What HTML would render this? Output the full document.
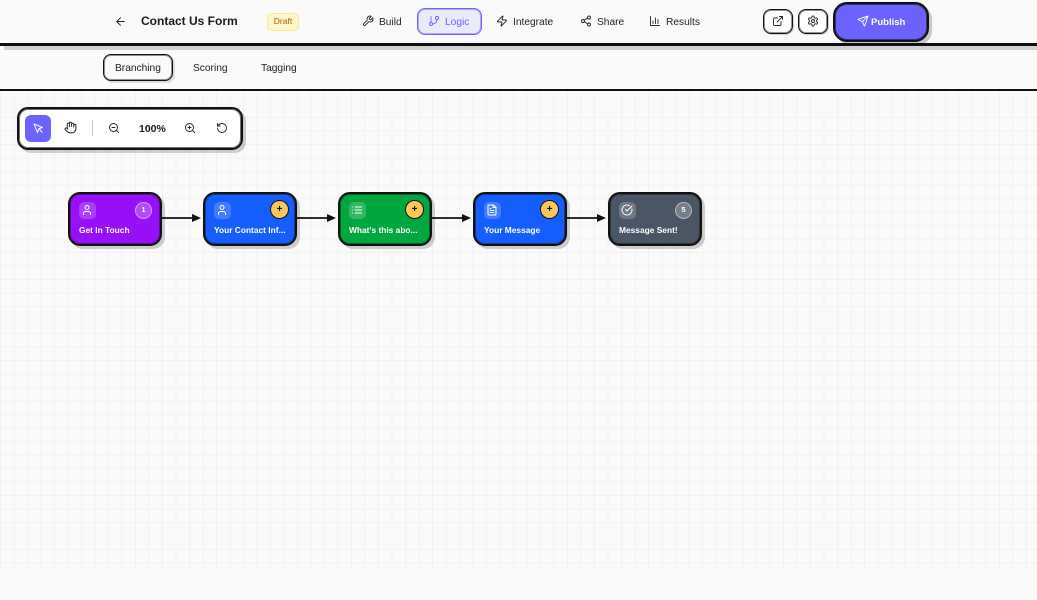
<!DOCTYPE html>
<html><head><meta charset="utf-8"><style>
*{box-sizing:border-box;margin:0;padding:0}
html,body{width:1037px;height:600px;overflow:hidden;background:#fafafa;font-family:"Liberation Sans",sans-serif;color:#111}
.a{position:absolute}
.t{position:absolute;white-space:nowrap;line-height:14px;font-size:10.2px;color:#222}
svg{position:absolute;fill:none;stroke:currentColor;stroke-width:2;stroke-linecap:round;stroke-linejoin:round}
.grid{left:0;top:90px;width:1037px;height:478px;background-image:linear-gradient(#f2f2f2 1px,transparent 1px),linear-gradient(90deg,#f2f2f2 1px,transparent 1px);background-size:13.5px 13.5px}
.node{position:absolute;top:192px;width:94px;height:54px;border:2px solid #111;border-radius:12px;box-shadow:inset 0 0 0 1px rgba(17,17,17,.45),3px 3px 0 rgba(0,0,0,.18)}
.node .ic{position:absolute;left:8.5px;top:7.5px;width:17px;height:17px;border-radius:5px;background:rgba(255,255,255,.2);color:#fff}
.node .ic svg{left:2.5px;top:2.5px}
.node .b{position:absolute;left:65px;top:8px;width:17px;height:17px;border-radius:50%;background:rgba(255,255,255,.25);border:1.5px solid rgba(255,255,255,.45);color:#fff;font-size:7.5px;font-weight:bold;text-align:center;line-height:14px}
.node .p{position:absolute;left:65px;top:6px;width:19px;height:19px;border-radius:50%;background:#fcc858;border:1.5px solid #111;color:#111;font-size:10px;font-weight:bold;text-align:center;line-height:18px}
.node .l{position:absolute;left:9px;top:31px;color:#fff;font-size:8.4px;font-weight:bold;white-space:nowrap;line-height:11px}
.btn{position:absolute;background:#fff;border:1px solid #111;border-radius:8px;box-shadow:inset 0 0 0 1px rgba(17,17,17,.45),1px 1px 0 rgba(0,0,0,.15)}
</style></head><body>
<div class="a grid"></div>

<!-- header -->
<div class="a" style="left:0;top:43px;width:1037px;height:3px;background:#111"></div>
<div class="a" style="left:4px;top:46px;width:1033px;height:4px;background:#d2d2d2"></div>
<svg style="left:114px;top:15px;color:#222;stroke-width:1.8" width="13" height="13" viewBox="0 0 24 24"><path d="M19 12H5M12 19l-7-7 7-7"/></svg>
<div class="t" style="left:141px;top:14px;font-size:12px;font-weight:bold;color:#1a1a1a">Contact Us Form</div>
<div class="a" style="left:267px;top:13px;width:32px;height:18px;background:#fdf6c8;border:1.5px solid #fbe88a;border-radius:5px;color:#a16207;font-size:8.5px;font-weight:500;text-align:center;line-height:15px">Draft</div>

<svg style="left:362px;top:15px;color:#222;stroke-width:1.8" width="12" height="12" viewBox="0 0 24 24"><path d="M14.7 6.3a1 1 0 0 0 0 1.4l1.6 1.6a1 1 0 0 0 1.4 0l3.77-3.77a6 6 0 0 1-7.94 7.94l-6.91 6.91a2.12 2.12 0 0 1-3-3l6.91-6.91a6 6 0 0 1 7.94-7.94z"/></svg>
<div class="t" style="left:379px;top:16px">Build</div>

<div class="a" style="left:417px;top:8px;width:65px;height:27px;background:#ecebfe;border:1px solid #6c63ff;border-radius:8px;box-shadow:inset 0 0 0 1px rgba(108,99,255,.5)"></div>
<svg style="left:428px;top:15px;color:#6c63ff;stroke-width:1.8" width="12" height="12" viewBox="0 0 24 24"><path d="M6 3v12"/><circle cx="18" cy="6" r="3"/><circle cx="6" cy="18" r="3"/><path d="M18 9a9 9 0 0 1-9 9"/></svg>
<div class="t" style="left:445px;top:16px;color:#6c63ff">Logic</div>

<svg style="left:496px;top:15px;color:#222;stroke-width:1.8" width="12" height="12" viewBox="0 0 24 24"><path d="M4 14a1 1 0 0 1-.78-1.63l9.9-10.2a.5.5 0 0 1 .86.46l-1.92 6.02A1 1 0 0 0 13 10h7a1 1 0 0 1 .78 1.63l-9.9 10.2a.5.5 0 0 1-.86-.46l1.92-6.02A1 1 0 0 0 11 14z"/></svg>
<div class="t" style="left:513px;top:16px">Integrate</div>

<svg style="left:580px;top:15px;color:#222;stroke-width:1.8" width="12" height="12" viewBox="0 0 24 24"><circle cx="18" cy="5" r="3"/><circle cx="6" cy="12" r="3"/><circle cx="18" cy="19" r="3"/><path d="m8.6 13.5 6.8 4M15.4 6.5l-6.8 4"/></svg>
<div class="t" style="left:597px;top:16px">Share</div>

<svg style="left:649px;top:15px;color:#222;stroke-width:1.8" width="12" height="12" viewBox="0 0 24 24"><path d="M3 3v18h18M8 17v-5M13 17V6M18 17v-8"/></svg>
<div class="t" style="left:666px;top:16px">Results</div>

<div class="btn" style="left:763px;top:9px;width:30px;height:25px"></div>
<svg style="left:772px;top:15px;color:#222;stroke-width:1.8" width="12" height="12" viewBox="0 0 24 24"><path d="M15 3h6v6M10 14 21 3M18 13v6a2 2 0 0 1-2 2H5a2 2 0 0 1-2-2V8a2 2 0 0 1 2-2h6"/></svg>
<div class="btn" style="left:798px;top:9px;width:30px;height:25px"></div>
<svg style="left:807px;top:15px;color:#222;stroke-width:1.8" width="12" height="12" viewBox="0 0 24 24"><path d="M12.22 2h-.44a2 2 0 0 0-2 2v.18a2 2 0 0 1-1 1.73l-.43.25a2 2 0 0 1-2 0l-.15-.08a2 2 0 0 0-2.73.73l-.22.38a2 2 0 0 0 .73 2.73l.15.1a2 2 0 0 1 1 1.72v.51a2 2 0 0 1-1 1.74l-.15.09a2 2 0 0 0-.73 2.73l.22.38a2 2 0 0 0 2.73.73l.15-.08a2 2 0 0 1 2 0l.43.25a2 2 0 0 1 1 1.73V20a2 2 0 0 0 2 2h.44a2 2 0 0 0 2-2v-.18a2 2 0 0 1 1-1.73l.43-.25a2 2 0 0 1 2 0l.15.08a2 2 0 0 0 2.73-.73l.22-.39a2 2 0 0 0-.73-2.73l-.15-.08a2 2 0 0 1-1-1.74v-.5a2 2 0 0 1 1-1.74l.15-.09a2 2 0 0 0 .73-2.73l-.22-.38a2 2 0 0 0-2.73-.73l-.15.08a2 2 0 0 1-2 0l-.43-.25a2 2 0 0 1-1-1.73V4a2 2 0 0 0-2-2z"/><circle cx="12" cy="12" r="3"/></svg>

<div class="a" style="left:833px;top:2px;width:96px;height:40px;background:#6c63ff;border:2px solid #111;border-radius:14px;box-shadow:inset 0 0 0 1px rgba(17,17,17,.6),3px 3px 0 rgba(0,0,0,.2)"></div>
<svg style="left:857px;top:15px;color:#fff;stroke-width:1.8" width="12" height="12" viewBox="0 0 24 24"><path d="M14.5 21.7a.5.5 0 0 0 .9 0l6.5-19a.5.5 0 0 0-.6-.6l-19 6.5a.5.5 0 0 0 0 .9l7.9 3.2a2 2 0 0 1 1.1 1.1zM21.9 2.1 10.9 13.1"/></svg>
<div class="t" style="left:871px;top:16px;color:#fff;font-weight:bold;font-size:9.5px">Publish</div>

<!-- sub tabs -->
<div class="btn" style="left:103px;top:54px;width:70px;height:27px;background:#fafafa;border-radius:8px;box-shadow:inset 0 0 0 1px rgba(17,17,17,.45),2px 2px 0 rgba(0,0,0,.12)"></div>
<div class="t" style="left:115px;top:62px">Branching</div>
<div class="t" style="left:193px;top:62px">Scoring</div>
<div class="t" style="left:261px;top:62px">Tagging</div>
<div class="a" style="left:0;top:89px;width:1037px;height:1.5px;background:#111"></div>

<!-- toolbar -->
<div class="a" style="left:17px;top:107px;width:226px;height:43px;background:#fff;border:2px solid #111;border-radius:11px;box-shadow:inset 0 0 0 1px rgba(17,17,17,.6),3px 3px 0 rgba(0,0,0,.18)"></div>
<div class="a" style="left:25px;top:115px;width:26px;height:27px;background:#6c63ff;border-radius:6px"></div>
<svg style="left:32px;top:122px;color:#fff;stroke-width:2" width="12" height="12" viewBox="0 0 24 24"><path d="M4 4l7 17 2.5-7.5L21 11z"/><path d="M14 14l6 6"/></svg>
<svg style="left:64px;top:121px;color:#222;stroke-width:1.8" width="13" height="13" viewBox="0 0 24 24"><path d="M18 11V6a2 2 0 0 0-4 0M14 10V4a2 2 0 0 0-4 0v2M10 10.5V6a2 2 0 0 0-4 0v8"/><path d="M18 8a2 2 0 0 1 4 0v6a8 8 0 0 1-8 8h-2c-2.8 0-4.5-.9-6-2.4l-3.6-3.6a2 2 0 0 1 2.8-2.8L7 15"/></svg>
<div class="a" style="left:92px;top:120px;width:1px;height:16px;background:#ccc"></div>
<svg style="left:108px;top:122px;color:#222;stroke-width:1.8" width="12" height="12" viewBox="0 0 24 24"><circle cx="11" cy="11" r="8"/><path d="m21 21-4.3-4.3M8 11h6"/></svg>
<div class="t" style="left:139px;top:122px;font-size:10.5px;font-weight:bold;color:#1a1a1a">100%</div>
<svg style="left:184px;top:122px;color:#222;stroke-width:1.8" width="12" height="12" viewBox="0 0 24 24"><circle cx="11" cy="11" r="8"/><path d="m21 21-4.3-4.3M8 11h6M11 8v6"/></svg>
<svg style="left:216px;top:122px;color:#222;stroke-width:1.8" width="12" height="12" viewBox="0 0 24 24"><path d="M3 12a9 9 0 1 0 9-9 9.75 9.75 0 0 0-6.74 2.74L3 8"/><path d="M3 3v5h5"/></svg>

<!-- arrows -->
<svg style="left:0;top:0;color:#111;stroke-width:1.8" width="1037" height="600" viewBox="0 0 1037 600"><path d="M162 218h33M297 218h33M432 218h33M567 218h33"/><g fill="#111" stroke="none"><path d="M192 214l9 4-9 4zM327 214l9 4-9 4zM462 214l9 4-9 4zM597 214l9 4-9 4z"/></g></svg>

<!-- nodes -->
<div class="node" style="left:68px;background:#9810fa"><div class="ic"><svg style="color:#fff;stroke-width:2" width="12" height="12" viewBox="0 0 24 24"><path d="M19 21v-2a4 4 0 0 0-4-4H9a4 4 0 0 0-4 4v2"/><circle cx="12" cy="7" r="4"/></svg></div><div class="b">1</div><div class="l">Get In Touch</div></div>
<div class="node" style="left:203px;background:#155dfc"><div class="ic"><svg style="color:#fff;stroke-width:2" width="12" height="12" viewBox="0 0 24 24"><path d="M19 21v-2a4 4 0 0 0-4-4H9a4 4 0 0 0-4 4v2"/><circle cx="12" cy="7" r="4"/></svg></div><div class="p">+</div><div class="l">Your Contact Inf...</div></div>
<div class="node" style="left:338px;background:#00a63e"><div class="ic"><svg style="color:#fff;stroke-width:2" width="12" height="12" viewBox="0 0 24 24"><path d="M8 6h13M8 12h13M8 18h13M3 6h.01M3 12h.01M3 18h.01"/></svg></div><div class="p">+</div><div class="l">What's this abo...</div></div>
<div class="node" style="left:473px;background:#155dfc"><div class="ic"><svg style="color:#fff;stroke-width:2" width="12" height="12" viewBox="0 0 24 24"><path d="M15 2H6a2 2 0 0 0-2 2v16a2 2 0 0 0 2 2h12a2 2 0 0 0 2-2V7z"/><path d="M14 2v5h6M16 13H8M16 17H8M10 9H8"/></svg></div><div class="p">+</div><div class="l">Your Message</div></div>
<div class="node" style="left:608px;background:#4a5565"><div class="ic"><svg style="color:#fff;stroke-width:2" width="12" height="12" viewBox="0 0 24 24"><path d="M21.8 10A10 10 0 1 1 17 3.3"/><path d="m9 11 3 3L22 4"/></svg></div><div class="b">5</div><div class="l">Message Sent!</div></div>
</body></html>
